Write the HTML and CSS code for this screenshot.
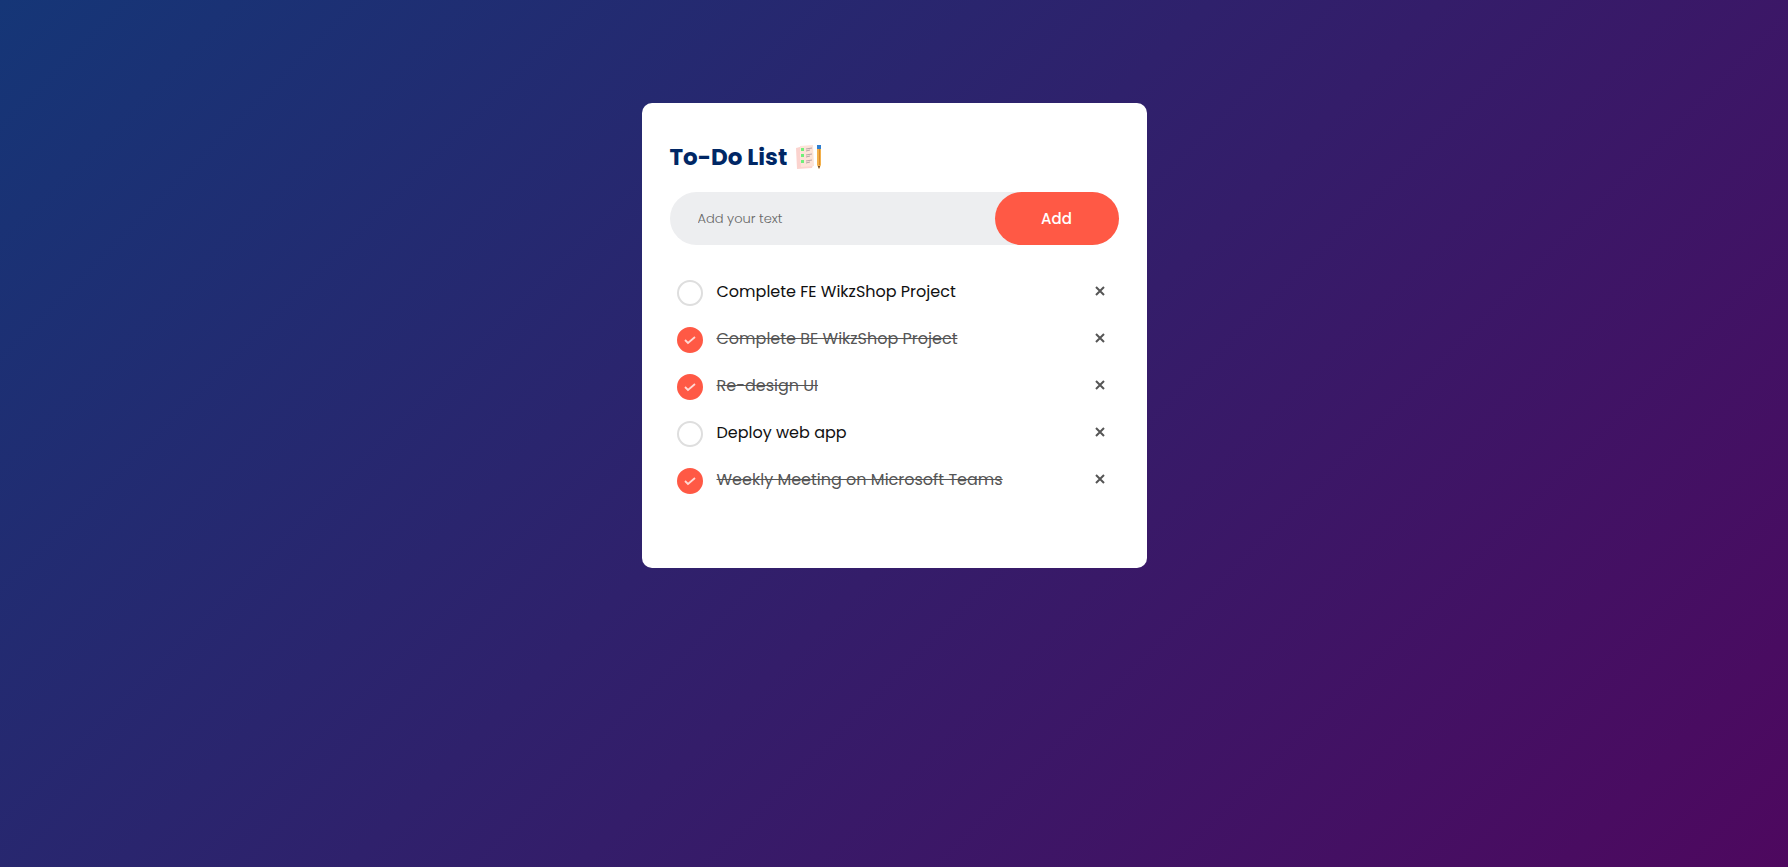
FILE: index.html
```html
<!DOCTYPE html>
<html lang="en">
<head>
<meta charset="utf-8">
<meta name="viewport" content="width=device-width, initial-scale=1">
<title>To-Do List</title>
<link rel="stylesheet" href="styles.css">
</head>
<body>
<main class="card">
  <h1 class="title">To-Do List
    <svg class="title-icon" viewBox="0 0 26 26" aria-hidden="true">
      <path d="M1 4l4-1 1 17 12 1-1 3-15 1z" fill="#fbd3ce"/>
      <path d="M5 2l13-1 1 21-13 1z" fill="#fde3d8"/>
      <path d="M6 4h3v3H6zM6 10h3v3H6zM6 16h3v3H6z" fill="#6ff07a"/>
      <path d="M11 5l6-1M11 7l4-1M11 11l6-1M11 13l4-1M11 17l6-1M11 19l4-1" stroke="#b9a5a8" stroke-width="1"/>
      <path d="M22 4h4v17l-2 4-2-4z" fill="#f3b04b"/>
      <path d="M24 4h1v17h-1z" fill="#d98a2c"/>
      <path d="M22 1h4v4h-4z" fill="#2f7fd0"/>
      <path d="M23 22h2l-1 3z" fill="#5b4036"/>
    </svg>
  </h1>
  <form class="entry">
    <input class="entry-text" type="text" placeholder="Add your text" aria-label="Add your text">
    <button class="entry-add" type="button">Add</button>
  </form>
  <ul class="tasks">
    <li class="task"><label class="task-label"><input class="task-check" type="checkbox"><span class="task-name">Complete FE WikzShop Project</span></label><button class="task-remove" type="button" aria-label="Remove"><svg class="cross" viewBox="0 0 10 10"><path d="M1 1l8 8M9 1l-8 8"/></svg></button></li>
    <li class="task"><label class="task-label"><input class="task-check" type="checkbox" checked><span class="task-name">Complete BE WikzShop Project</span></label><button class="task-remove" type="button" aria-label="Remove"><svg class="cross" viewBox="0 0 10 10"><path d="M1 1l8 8M9 1l-8 8"/></svg></button></li>
    <li class="task"><label class="task-label"><input class="task-check" type="checkbox" checked><span class="task-name">Re-design UI</span></label><button class="task-remove" type="button" aria-label="Remove"><svg class="cross" viewBox="0 0 10 10"><path d="M1 1l8 8M9 1l-8 8"/></svg></button></li>
    <li class="task"><label class="task-label"><input class="task-check" type="checkbox"><span class="task-name">Deploy web app</span></label><button class="task-remove" type="button" aria-label="Remove"><svg class="cross" viewBox="0 0 10 10"><path d="M1 1l8 8M9 1l-8 8"/></svg></button></li>
    <li class="task"><label class="task-label"><input class="task-check" type="checkbox" checked><span class="task-name">Weekly Meeting on Microsoft Teams</span></label><button class="task-remove" type="button" aria-label="Remove"><svg class="cross" viewBox="0 0 10 10"><path d="M1 1l8 8M9 1l-8 8"/></svg></button></li>
  </ul>
</main>
</body>
</html>
```
FILE: styles.css
```css
* {
  box-sizing: border-box;
  margin: 0;
  padding: 0;
  font-family: Poppins, Inter, "Open Sans", sans-serif;
}

body {
  min-height: 100vh;
  padding: 103px 12px 24px;
  background: linear-gradient(135deg, #153677, #4e085f);
}

.card {
  max-width: 505px;
  margin: 0 auto;
  padding: 36px 28px 64px;
  border-radius: 10px;
  background: #fff;
}

.title {
  display: flex;
  align-items: center;
  gap: 8px;
  margin-bottom: 17px;
  color: #002765;
  font-size: 23px;
  font-weight: 700;
  line-height: 36px;
}

.title-icon {
  width: 26px;
  height: 26px;
}

.entry {
  display: flex;
  height: 53px;
  margin-bottom: 24px;
  border-radius: 30px;
  background: #edeef0;
}

.entry-text {
  flex: 1;
  min-width: 0;
  padding-left: 28px;
  border: 0;
  outline: 0;
  background: transparent;
  font-size: 13px;
  font-weight: 300;
}

.entry-text::placeholder {
  color: #666;
}

.entry-add {
  width: 124px;
  border: 0;
  border-radius: 30px;
  background: #ff5945;
  color: #fff;
  font-size: 15px;
  font-weight: 500;
  cursor: pointer;
}

.tasks {
  list-style: none;
}

.task {
  display: flex;
  align-items: center;
  min-height: 47px;
  padding: 0 5px 0 7px;
}

.task-label {
  display: flex;
  flex: 1;
  align-items: center;
  gap: 14px;
  cursor: pointer;
}

.task-check {
  flex: none;
  width: 26px;
  height: 26px;
  border: 2px solid #dedede;
  border-radius: 50%;
  appearance: none;
  background: #fff;
}

.task-check:checked {
  border-color: #ff5945;
  background: #ff5945 url("data:image/svg+xml,%3Csvg xmlns='http://www.w3.org/2000/svg' viewBox='0 0 22 22'%3E%3Cpath d='M6 11l3 3 7-6' fill='none' stroke='%23ffd9d4' stroke-width='1.8'/%3E%3C/svg%3E") center / 22px no-repeat;
}

.task-name {
  padding-bottom: 2px;
  color: #111;
  font-size: 16px;
  line-height: 24px;
}

.task-check:checked + .task-name {
  color: #555;
  text-decoration: line-through;
}

.task-remove {
  display: grid;
  place-items: center;
  width: 28px;
  height: 28px;
  margin-bottom: 4px;
  border: 0;
  background: transparent;
  cursor: pointer;
}

.cross {
  width: 10px;
  height: 10px;
  fill: none;
  stroke: #555;
  stroke-width: 2;
}
```
